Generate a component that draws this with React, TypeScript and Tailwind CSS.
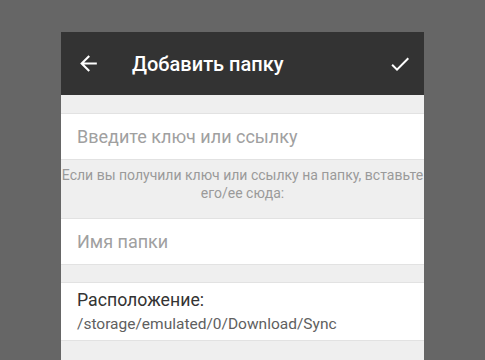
import React from "react";

export default function App() {
  return (
    <div
      className="h-[360px] w-[485px] overflow-hidden bg-[#666666] pl-[61px] pt-[32px]"
      style={{ fontFamily: "Roboto, 'Noto Sans', sans-serif" }}
    >
      <div className="flex h-[340px] w-[363px] flex-col overflow-hidden bg-[#efefef]">
        <div className="flex h-[63px] shrink-0 items-center bg-[#333333] pl-[15px] pr-[12px]">
          <svg width="25" height="25" viewBox="0 0 24 24" fill="#ffffff">
            <path d="M20 11H7.83l5.59-5.59L12 4l-8 8 8 8 1.41-1.41L7.83 13H20v-2z" />
          </svg>
          <div className="ml-[31px] text-[20px] font-medium text-white">Добавить папку</div>
          <div className="flex-1" />
          <svg width="24" height="24" viewBox="0 0 24 24" fill="#ffffff">
            <path d="M9 16.17L4.83 12l-1.42 1.41L9 19 21 7l-1.41-1.41z" />
          </svg>
        </div>
        <div className="h-[18px] shrink-0" />
        <div className="flex h-[47px] shrink-0 items-center border-y border-[#e2e2e2] bg-white pl-[16px] text-[18px] text-[#a0a0a0]">
          Введите ключ или ссылку
        </div>
        <div className="flex h-[58px] shrink-0 flex-col items-center pt-[6px] text-[14px] leading-[18px] text-[#9a9a9a]">
          <div className="whitespace-nowrap">Если вы получили ключ или ссылку на папку, вставьте</div>
          <div className="whitespace-nowrap">его/ее сюда:</div>
        </div>
        <div className="flex h-[47px] shrink-0 items-center border-y border-[#e2e2e2] bg-white pl-[16px] text-[18px] text-[#a0a0a0]">
          Имя папки
        </div>
        <div className="h-[17px] shrink-0" />
        <div className="flex h-[59px] shrink-0 flex-col justify-center border-y border-[#e2e2e2] bg-white pl-[16px]">
          <div className="text-[17.7px] leading-[22px] text-[#333333]">Расположение:</div>
          <div className="mt-[4px] text-[15.5px] leading-[19px] text-[#606060]">/storage/emulated/0/Download/Sync</div>
        </div>
      </div>
    </div>
  );
}
